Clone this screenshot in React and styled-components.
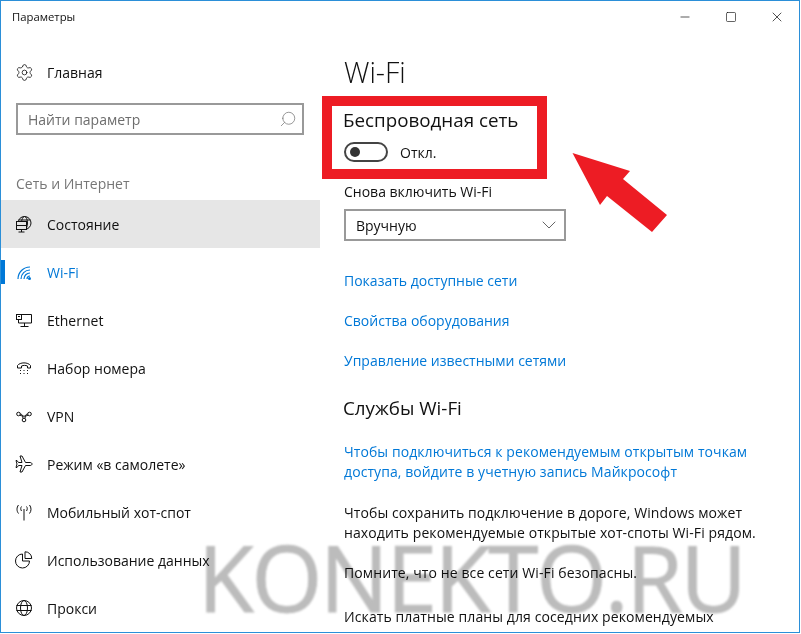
import React from "react";
import styled, { createGlobalStyle } from "styled-components";
import { Settings, Search, Minus, Square, X, ChevronDown } from "lucide-react";

const GlobalStyle = createGlobalStyle`
  html, body {
    margin: 0;
    padding: 0;
    background: #fff;
  }
  * {
    box-sizing: border-box;
  }
`;

const StatusIcon = () => (
  <svg width="18" height="18" viewBox="0 0 18 18" fill="none" stroke="#111" strokeWidth="1">
    <circle cx="9.500" cy="8" r="6.500" />
    <ellipse cx="9.500" cy="8" rx="3" ry="6.500" />
    <path d="M3.500 5h12" />
    <rect x="1.500" y="6.500" width="10" height="8" fill="#e6e6e6" />
    <path d="M1.500 10.500h10M6.500 14.500v2.500M3.500 17h6" />
  </svg>
);

const WifiIcon = () => (
  <svg width="18" height="18" viewBox="0 0 18 18" fill="none" stroke="#0078d7" strokeWidth="1.200">
    <path d="M3 16A12 12 0 0 1 15 4M6 16A9 9 0 0 1 15 7M9 16A6 6 0 0 1 15 10M12 16A3 3 0 0 1 15 13" />
    <circle cx="14.500" cy="15.500" r="1.500" fill="#0078d7" stroke="none" />
  </svg>
);

const EthernetIcon = () => (
  <svg width="18" height="18" viewBox="0 0 18 18" fill="none" stroke="#111" strokeWidth="1">
    <rect x="1.500" y="3.500" width="5" height="5" />
    <path d="M6.500 3.500h10v8.500H3.500V8.500M9.500 12v3.500M5.500 15.500h8M3 5.500h2" />
  </svg>
);

const DialIcon = () => (
  <svg width="18" height="18" viewBox="0 0 18 18" fill="none" stroke="#111" strokeWidth="1">
    <path d="M2.500 9V6.500C5 3 13 3 15.500 6.500V9h-3V7c-2-.8-4-.8-6 0v2z" />
    <path d="M5 11.500h1M8.500 11.500h1M12 11.500h1M5 14.500h1M8.500 14.500h1M12 14.500h1" />
  </svg>
);

const VpnIcon = () => (
  <svg width="18" height="18" viewBox="0 0 18 18" fill="none" stroke="#111" strokeWidth="1">
    <circle cx="3.500" cy="7" r="1.800" />
    <circle cx="14.500" cy="7" r="1.800" />
    <circle cx="9" cy="13" r="1.800" />
    <path d="M5.300 7C7.500 7 7.500 9 8 11.300M12.700 7C10.500 7 10.500 9 10 11.300M5 8.200c2.500 1.300 5.500 1.300 8 0" />
  </svg>
);

const PlaneIcon = () => (
  <svg width="18" height="18" viewBox="0 0 18 18" fill="none" stroke="#111" strokeWidth="1">
    <path d="M17 9c0-1-1-1.500-2-1.500h-4.500L7 1H5l2 6.500H3.500L2 5.500H1l1 3.500-1 3.500h1l1.500-2H7L5 17h2l3.500-6.500H15c1 0 2-.5 2-1.500z" />
  </svg>
);

const HotspotIcon = () => (
  <svg width="18" height="18" viewBox="0 0 18 18" fill="none" stroke="#111" strokeWidth="1">
    <path d="M9 6v11.500M6.500 3.500c-1 1.200-1 3 0 4.500M11.500 3.500c1 1.200 1 3 0 4.500M3.500 2c-2 2.500-2 6 0 8.500M14.500 2c2 2.500 2 6 0 8.500" />
  </svg>
);

const DataIcon = () => (
  <svg width="18" height="18" viewBox="0 0 18 18" fill="none" stroke="#111" strokeWidth="1">
    <path d="M7.500 3a7 7 0 1 0 7 7h-7z" />
    <path d="M10 .8a6.500 6.500 0 0 1 6.700 6.700H10z" />
  </svg>
);

const ProxyIcon = () => (
  <svg width="18" height="18" viewBox="0 0 18 18" fill="none" stroke="#111" strokeWidth="1">
    <circle cx="9" cy="9" r="7.500" />
    <ellipse cx="9" cy="9" rx="3.500" ry="7.500" />
    <path d="M1.500 6.500h15M1.500 11.500h15" />
  </svg>
);

const navItems = [
  { label: "Состояние", icon: <StatusIcon />, hovered: true },
  { label: "Wi-Fi", icon: <WifiIcon />, active: true },
  { label: "Ethernet", icon: <EthernetIcon /> },
  { label: "Набор номера", icon: <DialIcon /> },
  { label: "VPN", icon: <VpnIcon /> },
  { label: "Режим «в самолете»", icon: <PlaneIcon /> },
  { label: "Мобильный хот-спот", icon: <HotspotIcon /> },
  { label: "Использование данных", icon: <DataIcon /> },
  { label: "Прокси", icon: <ProxyIcon /> },
];

const App = () => {
  return (
    <>
      <GlobalStyle />
      <Screen>
        <Window>
          <TitleBar>
            <WindowTitle>Параметры</WindowTitle>
            <WindowButtons>
              <WindowButton>
                <Minus size={14} strokeWidth={1.2} />
              </WindowButton>
              <WindowButton>
                <Square size={12} strokeWidth={1.3} />
              </WindowButton>
              <WindowButton>
                <X size={16} strokeWidth={1.1} />
              </WindowButton>
            </WindowButtons>
          </TitleBar>
          <Body>
            <Sidebar>
              <HomeRow>
                <IconSlot>
                  <Settings size={19} strokeWidth={1} color="#111" />
                </IconSlot>
                Главная
              </HomeRow>
              <SearchBox>
                <SearchText>Найти параметр</SearchText>
                <SearchIcon>
                  <Search size={18} strokeWidth={1} color="#777" />
                </SearchIcon>
              </SearchBox>
              <SectionLabel>Сеть и Интернет</SectionLabel>
              {navItems.map((item) => (
                <NavRow key={item.label} $hovered={item.hovered} $active={item.active}>
                  <IconSlot>{item.icon}</IconSlot>
                  {item.label}
                </NavRow>
              ))}
            </Sidebar>
            <Content>
              <PageTitle>Wi-Fi</PageTitle>
              <Heading>Беспроводная сеть</Heading>
              <ToggleRow>
                <Toggle />
                <ToggleLabel>Откл.</ToggleLabel>
              </ToggleRow>
              <FieldLabel>Снова включить Wi-Fi</FieldLabel>
              <Select>
                Вручную
                <ChevronDown size={24} strokeWidth={0.9} color="#555" />
              </Select>
              <LinkRow>Показать доступные сети</LinkRow>
              <LinkRow>Свойства оборудования</LinkRow>
              <LinkRow>Управление известными сетями</LinkRow>
              <SubHeading>Службы Wi-Fi</SubHeading>
              <LinkText>
                Чтобы подключиться к рекомендуемым открытым точкам
                <br />
                доступа, войдите в учетную запись Майкрософт
              </LinkText>
              <Paragraph>
                Чтобы сохранить подключение в дороге, Windows может
                <br />
                находить рекомендуемые открытые хот-споты Wi-Fi рядом.
              </Paragraph>
              <Paragraph $gap={20}>Помните, что не все сети Wi-Fi безопасны.</Paragraph>
              <Paragraph $gap={24}>Искать платные планы для соседних рекомендуемых</Paragraph>
            </Content>
          </Body>
        </Window>
        <RedFrame />
        <Arrow viewBox="0 0 110 90" width="110" height="90">
          <polygon points="1.500,2 59,20 52,28 96,64 81,81 36,45 29,54" fill="#ed1c24" />
        </Arrow>
        <Watermark>KONEKTO.RU</Watermark>
      </Screen>
    </>
  );
};
export default App;

const Screen = styled.div`
  position: relative;
  width: 801px;
  height: 634px;
  overflow: hidden;
  background: #fff;
  font-family: "Open Sans", "Noto Sans", sans-serif;
  color: #111;
`;

const Window = styled.div`
  width: 800px;
  height: 633px;
  border: 1px solid #2b8fd8;
  display: flex;
  flex-direction: column;
  overflow: hidden;
`;

const TitleBar = styled.div`
  height: 31px;
  flex-shrink: 0;
  display: flex;
  align-items: center;
  justify-content: space-between;
`;

const WindowTitle = styled.div`
  font-size: 11.3px;
  padding-left: 11px;
`;

const WindowButtons = styled.div`
  display: flex;
  margin-right: -1px;
`;

const WindowButton = styled.div`
  width: 46px;
  height: 31px;
  display: flex;
  align-items: center;
  justify-content: center;
  color: #111;
`;

const Body = styled.div`
  flex: 1;
  display: flex;
  min-height: 0;
`;

const Sidebar = styled.div`
  width: 319px;
  flex-shrink: 0;
  font-size: 14px;
`;

const IconSlot = styled.span`
  width: 46px;
  padding-left: 14px;
  flex-shrink: 0;
  display: flex;
  align-items: center;
`;

const HomeRow = styled.div`
  height: 48px;
  margin-top: 16px;
  display: flex;
  align-items: center;
`;

const SearchBox = styled.div`
  margin: 7px 16px 0 15px;
  width: 288px;
  height: 32px;
  border: 2px solid #999;
  display: flex;
  align-items: center;
  justify-content: space-between;
  padding: 0 5px 0 10px;
`;

const SearchText = styled.span`
  color: #6d6d6d;
`;

const SearchIcon = styled.span`
  display: flex;
  transform: scaleX(-1);
`;

const SectionLabel = styled.div`
  margin: 37px 0 0 15px;
  height: 28px;
  color: #767676;
  line-height: 24px;
`;

const NavRow = styled.div`
  position: relative;
  height: 48px;
  display: flex;
  align-items: center;
  background: ${(p) => (p.$hovered ? "#e6e6e6" : "transparent")};
  color: ${(p) => (p.$active ? "#0078d7" : "#111")};

  &::before {
    content: "";
    display: ${(p) => (p.$active ? "block" : "none")};
    position: absolute;
    left: 0;
    top: 12px;
    width: 4px;
    height: 24px;
    background: #0078d7;
  }
`;

const Content = styled.div`
  flex: 1;
  padding-left: 24px;
  font-size: 14px;
`;

const PageTitle = styled.h1`
  margin: 16px 0 0;
  font-size: 28.5px;
  font-weight: 300;
  line-height: 48px;
  height: 48px;
`;

const Heading = styled.h2`
  margin: 10px 0 0 -1px;
  font-size: 18.8px;
  font-weight: 400;
  line-height: 26px;
  padding-top: 1px;
`;

const ToggleRow = styled.div`
  display: flex;
  align-items: center;
  margin-top: 9px;
  height: 20px;
`;

const Toggle = styled.div`
  position: relative;
  width: 44px;
  height: 20px;
  border: 2px solid #444;
  border-radius: 10px;

  &::after {
    content: "";
    position: absolute;
    left: 4px;
    top: 3px;
    width: 10px;
    height: 10px;
    border-radius: 50%;
    background: #333;
  }
`;

const ToggleLabel = styled.span`
  margin-left: 12px;
`;

const FieldLabel = styled.div`
  margin-top: 20px;
  height: 20px;
  line-height: 20px;
`;

const Select = styled.div`
  margin-top: 7px;
  width: 222px;
  height: 32px;
  border: 2px solid #999;
  display: flex;
  align-items: center;
  justify-content: space-between;
  padding: 0 3px 0 10px;
`;

const LinkRow = styled.div`
  color: #0078d7;
  height: 20px;
  line-height: 20px;
  margin-top: 20px;

  ${Select} + & {
    margin-top: 30px;
  }
`;

const SubHeading = styled.h2`
  margin: 23px 0 0 -1px;
  font-size: 18.8px;
  font-weight: 400;
  line-height: 28px;
`;

const LinkText = styled.div`
  color: #0078d7;
  margin-top: 20px;
  line-height: 20px;
  letter-spacing: 0.08px;
`;

const Paragraph = styled.div`
  margin-top: ${(p) => p.$gap ?? 21}px;
  line-height: 20px;
  letter-spacing: 0.1px;
  white-space: nowrap;
`;

const RedFrame = styled.div`
  position: absolute;
  left: 322px;
  top: 96px;
  width: 225px;
  height: 83px;
  border: 10px solid #ed1c24;
`;

const Arrow = styled.svg`
  position: absolute;
  left: 571px;
  top: 151px;
`;

const Watermark = styled.div`
  position: absolute;
  left: 198px;
  top: 527px;
  font-family: "Open Sans", sans-serif;
  font-size: 91px;
  line-height: 100px;
  letter-spacing: -2.2px;
  white-space: nowrap;
  color: #bcbcbc;
  -webkit-text-stroke: 1px #bcbcbc;
  mix-blend-mode: multiply;
  filter: blur(1px);
  pointer-events: none;
`;
